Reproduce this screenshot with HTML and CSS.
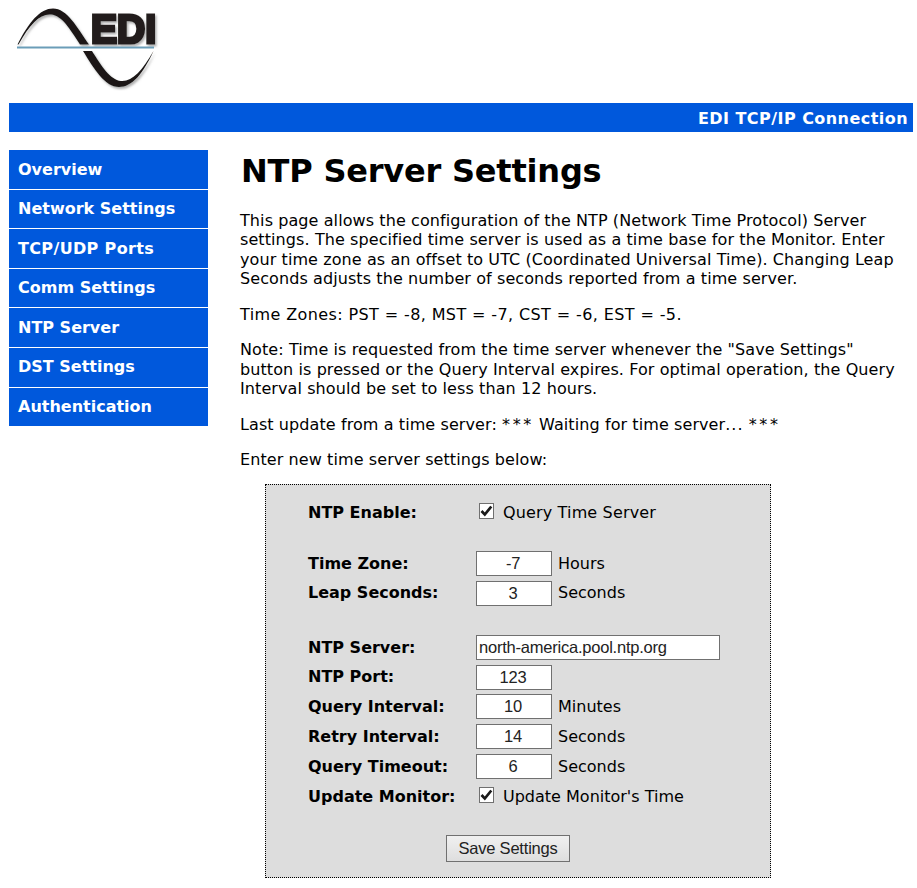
FILE: index.html
```
<!DOCTYPE html>
<html lang="en">
<head>
    <meta charset="UTF-8">
    <title>EDI TCP/IP Connection</title>
    <link rel="stylesheet" href="styles.css">
</head>
<body>
    <div class="logo">
        <svg width="160" height="92" viewBox="0 0 160 92">
            <defs>
                <filter id="shadow" x="-10%" y="-10%" width="120%" height="125%">
                    <feDropShadow dx="1.5" dy="2" stdDeviation="1.3" flood-color="#777" flood-opacity="0.6"/>
                </filter>
            </defs>
            <g filter="url(#shadow)">
                <path fill="#1a1816" d="M17.500 44.500 C29 22 40 8.500 53 8.500 C67 8.500 77 27 89 44.500 L80 44.500 C70 29 62 15.500 51 14.500 C40 13.500 30 24 18.500 44.500 Z"/>
                <path fill="#1a1816" d="M83 51 L92 51 C101 65 110 80 121 81 C132 82 142 71 153.500 51 C143 74 132 87 119 87 C105 87 94 69 83 51 Z"/>
                <text class="logo-text" x="91" y="43" textLength="65" lengthAdjust="spacingAndGlyphs">EDI</text>
            </g>
            <rect x="17" y="46.500" width="137" height="2" fill="#6b9db8"/>
        </svg>
    </div>

    <div class="header">EDI TCP/IP Connection</div>

    <div class="container">
        <!-- Left menu -->
        <div class="menu">
            <a href="#">Overview</a>
            <a href="#">Network Settings</a>
            <a href="#" class="ports">TCP/UDP Ports</a>
            <a href="#">Comm Settings</a>
            <a href="#">NTP Server</a>
            <a href="#">DST Settings</a>
            <a href="#">Authentication</a>
        </div>

        <div class="content">
            <h1>NTP Server Settings</h1>
            <p>This page allows the configuration of the NTP (Network Time Protocol) Server<br>
            settings. The specified time server is used as a time base for the Monitor. Enter<br>
            your time zone as an offset to UTC (Coordinated Universal Time). Changing Leap<br>
            Seconds adjusts the number of seconds reported from a time server.</p>
            <p class="zones">Time Zones: PST = -8, MST = -7, CST = -6, EST = -5.</p>
            <p>Note: Time is requested from the time server whenever the "Save Settings"<br>
            button is pressed or the Query Interval expires. For optimal operation, the Query<br>
            Interval should be set to less than 12 hours.</p>
            <p>Last update from a time server: <span class="stars">***</span> Waiting for time server<span class="dots">...</span> <span class="stars">***</span></p>
            <p>Enter new time server settings below:</p>

            <form class="settings">
                <div class="row check-row">
                    <label>NTP Enable:</label>
                    <svg class="check" width="15" height="16" viewBox="0 0 15 16"><rect x=".5" y=".5" width="14" height="15" fill="#fff" stroke="#707070"/><path d="M2.500 8 L5.800 11.500 L12.300 3.500" fill="none" stroke="#1a1a1a" stroke-width="2.700"/></svg>
                    <span class="check-text">Query Time Server</span>
                </div>
                <div class="row zone-row">
                    <label>Time Zone:</label>
                    <input type="text" value="-7"><span class="unit">Hours</span>
                </div>
                <div class="row">
                    <label>Leap Seconds:</label>
                    <input type="text" value="3"><span class="unit">Seconds</span>
                </div>
                <div class="row server-row">
                    <label>NTP Server:</label>
                    <input type="text" class="wide" value="north-america.pool.ntp.org">
                </div>
                <div class="row">
                    <label>NTP Port:</label>
                    <input type="text" value="123">
                </div>
                <div class="row">
                    <label>Query Interval:</label>
                    <input type="text" value="10"><span class="unit">Minutes</span>
                </div>
                <div class="row">
                    <label>Retry Interval:</label>
                    <input type="text" value="14"><span class="unit">Seconds</span>
                </div>
                <div class="row">
                    <label>Query Timeout:</label>
                    <input type="text" value="6"><span class="unit">Seconds</span>
                </div>
                <div class="row check-row">
                    <label>Update Monitor:</label>
                    <svg class="check" width="15" height="16" viewBox="0 0 15 16"><rect x=".5" y=".5" width="14" height="15" fill="#fff" stroke="#707070"/><path d="M2.500 8 L5.800 11.500 L12.300 3.500" fill="none" stroke="#1a1a1a" stroke-width="2.700"/></svg>
                    <span>Update Monitor's Time</span>
                </div>
                <button type="button">Save Settings</button>
            </form>
        </div>
    </div>
</body>
</html>
```

FILE: styles.css
```
body {
    font-family: Verdana, "DejaVu Sans", sans-serif;
    font-size: 16px;
    line-height: 19.45px;
    margin: 0 4px 0 9px;
    color: #000;
    background-color: #fff;
}
.logo {
    height: 103px;
    margin-left: -9px;
}
.logo svg {
    display: block;
}
.logo-text {
    font-family: "Liberation Sans", Arial, sans-serif;
    font-size: 40px;
    font-weight: bold;
    fill: #241f1c;
    stroke: #241f1c;
    stroke-width: 3.2px;
}
.header {
    box-sizing: border-box;
    height: 29px;
    padding: 6px 5px 0 0;
    background-color: #0058dc;
    color: #fff;
    font-weight: bold;
    text-align: right;
    letter-spacing: 0.45px;
}
.container {
    display: flex;
    padding-top: 18px;
}
.menu {
    width: 199px;
    margin-right: 32px;
}
.menu a {
    display: block;
    box-sizing: border-box;
    height: 38.6px;
    margin-bottom: 1px;
    padding: 9.500px 9px 0;
    background-color: #0058dc;
    color: #fff;
    font-weight: bold;
    text-decoration: none;
}
.menu .ports {
    letter-spacing: 0.35px;
}
.content {
    flex: 1;
    white-space: nowrap;
}
h1 {
    margin: 0 0 20px 1px;
    padding-top: 2px;
    font-size: 32px;
    line-height: 39px;
    letter-spacing: -0.2px;
}
p {
    margin: 0 0 16px;
    letter-spacing: 0.09px;
}
.zones {
    letter-spacing: 0.39px;
}
.stars {
    letter-spacing: 2.6px;
}
.dots {
    letter-spacing: 1px;
}

/* Settings form */
.settings {
    box-sizing: border-box;
    width: 506px;
    height: 394px;
    margin: -2px 0 0 25px;
    padding: 13px 0 0 42px;
    border: 1px dotted #000;
    background-color: #ddd;
}
.row {
    display: flex;
    align-items: center;
    height: 29.8px;
}
.zone-row {
    margin-top: 21.200px;
}
.server-row {
    margin-top: 24.300px;
}
.row label {
    width: 168px;
    font-weight: bold;
}
.row input {
    box-sizing: border-box;
    width: 76px;
    height: 25px;
    padding: 0 3px 0 1px;
    border: 1px solid #707070;
    font-family: "Liberation Sans", Arial, sans-serif;
    font-size: 16.500px;
    letter-spacing: -0.22px;
    text-align: center;
    color: #222;
}
.row input.wide {
    width: 244px;
    padding: 0 2px;
    text-align: left;
}
.unit {
    margin-left: 6px;
}
.check {
    margin: 0 9px 3px 3px;
}
.check-text {
    padding-top: 1px;
    letter-spacing: 0.15px;
}
button {
    display: block;
    width: 124px;
    height: 27px;
    margin: 24px 0 0 138px;
    padding: 0;
    border: 1px solid #707070;
    background: linear-gradient(#f0f0f0, #dedede);
    font-family: "Liberation Sans", Arial, sans-serif;
    font-size: 16.500px;
    letter-spacing: -0.2px;
    color: #222;
}
```
